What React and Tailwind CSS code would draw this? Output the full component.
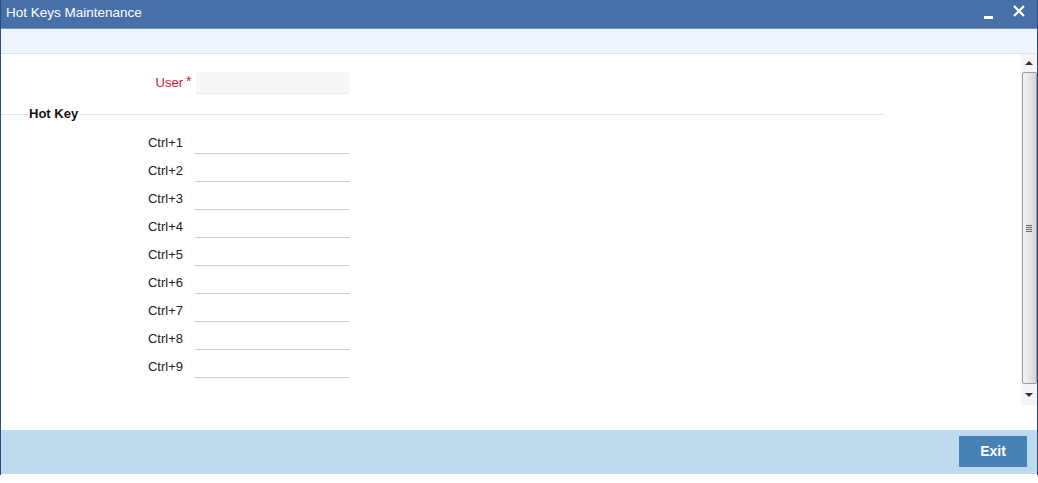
import React from "react";

const keys = [1, 2, 3, 4, 5, 6, 7, 8, 9];

function Scrollbar() {
  return (
    <div className="w-[16px] h-[351px] bg-[#f4f4f4] flex flex-col items-center">
      <div className="h-[17px] w-full flex items-center justify-center">
        <div className="w-0 h-0 border-l-[4px] border-r-[4px] border-b-[4px] border-l-transparent border-r-transparent border-b-[#333]" />
      </div>
      <div className="mt-[1px] w-[15px] h-[312px] rounded-[2px] border border-[#9a9a9a] bg-gradient-to-r from-[#f3f3f3] via-[#e6e6e6] to-[#d6d6d6] flex items-center justify-center">
        <div className="flex flex-col gap-[1px]">
          <div className="w-[6px] h-[1px] bg-[#6a6a6a]" />
          <div className="w-[6px] h-[1px] bg-[#6a6a6a]" />
          <div className="w-[6px] h-[1px] bg-[#6a6a6a]" />
          <div className="w-[6px] h-[1px] bg-[#6a6a6a]" />
        </div>
      </div>
      <div className="flex-1 w-full flex items-center justify-center">
        <div className="w-0 h-0 border-l-[4px] border-r-[4px] border-t-[4px] border-l-transparent border-r-transparent border-t-[#333]" />
      </div>
    </div>
  );
}

export default function App() {
  return (
    <div className="w-[1038px] h-[483px] bg-white font-['Liberation_Sans',Arial,sans-serif] text-[13px] text-[#222]">
      <div className="h-[475px] border-l border-r border-[#2c4c7e] flex flex-col">
        {/* title bar */}
        <div className="h-[29px] bg-[#4870a8] border-b border-[#7d95b8] flex items-center pl-[5px] pr-[12px]">
          <span className="text-white text-[13.5px] leading-none -mt-[2px]">Hot Keys Maintenance</span>
          <div className="ml-auto flex items-center gap-[20px]">
            <div className="w-[9px] h-[3px] bg-white mt-[6px]" />
            <svg width="12" height="12" viewBox="0 0 12 12" className="-mt-[6px]">
              <path d="M1 1 L11 11 M11 1 L1 11" stroke="white" strokeWidth="2.2" />
            </svg>
          </div>
        </div>

        {/* toolbar strip */}
        <div className="h-[25px] bg-[#eef5fd] border-b border-[#dfe3e8]" />

        {/* content */}
        <div className="flex-1 flex">
          <div className="flex-1 pt-[18px]">
            <div className="flex items-center h-[22px]">
              <div className="w-[182px] text-right text-[#c8202f]">User</div>
              <span className="w-[13px] pl-[3px] text-[#c8202f] text-[14px] -mt-[4px]">*</span>
              <div className="w-[153px] h-[22px] bg-[#f7f7f7] border-b border-[#ececec]" />
            </div>

            <div className="mt-[10px] w-[883px] relative flex items-center h-[20px]">
              <div className="absolute left-0 right-0 top-[10px] h-[1px] bg-[#e3e3e3]" />
              <span className="relative ml-[27px] px-[1px] bg-white font-bold text-[#111]">Hot Key</span>
            </div>

            <div className="mt-[8px] flex flex-col gap-[6px]">
              {keys.map((k) => (
                <div key={k} className="flex items-center h-[22px]">
                  <div className="w-[182px] text-right">Ctrl+{k}</div>
                  <div className="ml-[12px] w-[155px] h-[22px] border-b border-[#cfcfcf]" />
                </div>
              ))}
            </div>
          </div>
          <Scrollbar />
        </div>

        {/* footer */}
        <div className="h-[44px] bg-[#bfdaed] flex items-start justify-end pr-[10px] pt-[6px]">
          <button className="w-[68px] h-[31px] bg-[#4682b4] text-white font-bold text-[14px]">
            Exit
          </button>
        </div>
        <div className="h-[1px] bg-white" />
      </div>
    </div>
  );
}
